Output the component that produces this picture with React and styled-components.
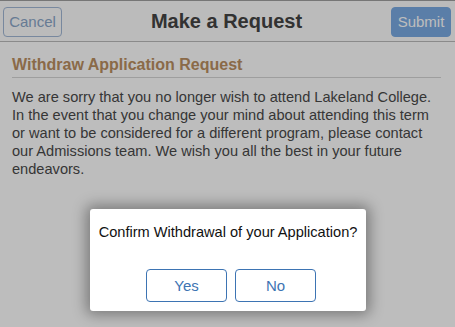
import React from "react";
import styled, { createGlobalStyle } from "styled-components";

const Global = createGlobalStyle`
  html, body { margin: 0; padding: 0; background: #fff; }
  body { font-family: "Liberation Sans", Arial, sans-serif; width: 455px; height: 327px; overflow: hidden; }
  #root { position: relative; width: 455px; height: 327px; }
`;

const Page = styled.div`
  width: 455px;
  height: 327px;
  background: #fff;
  border-top: 1px solid #a0a0a0;
  box-sizing: border-box;
`;

const Header = styled.header`
  height: 41px;
  box-sizing: border-box;
  display: flex;
  align-items: center;
  justify-content: space-between;
  padding: 0 4px 0 3px;
  border-bottom: 1px solid #bbb;
  background: #fcfcfc;
`;

const HeaderButton = styled.button`
  height: 30px;
  width: ${(p) => p.$w}px;
  margin-top: 1px;
  box-sizing: border-box;
  border-radius: 4px;
  font-family: "Liberation Sans", Arial, sans-serif;
  font-size: 15px;
  padding: 0;
  border: 1px solid ${(p) => (p.$primary ? "#7aabe3" : "#a2b8d6")};
  background: ${(p) => (p.$primary ? "#7aabe3" : "transparent")};
  color: ${(p) => (p.$primary ? "#fff" : "#8aa6c8")};
`;

const Title = styled.h1`
  margin: 0;
  font-size: 20px;
  font-weight: bold;
  color: #444;
`;

const Content = styled.main`
  padding: 14px 14px 0 12px;
`;

const SectionTitle = styled.h2`
  margin: 0;
  font-size: 16px;
  font-weight: bold;
  color: #bb8f62;
  padding-bottom: 3px;
  border-bottom: 1px solid #d6d6d6;
`;

const Paragraph = styled.p`
  margin: 10px 0 0;
  font-size: 14.6px;
  line-height: 18px;
  color: #4a4a4a;
`;

const Overlay = styled.div`
  position: absolute;
  inset: 0;
  background: rgba(0, 0, 0, 0.26);
`;

const Modal = styled.div`
  position: absolute;
  left: 90px;
  top: 209px;
  width: 276px;
  height: 102px;
  box-sizing: border-box;
  background: #fff;
  border-radius: 3px;
  box-shadow: 0 0 14px 4px rgba(0, 0, 0, 0.35);
  display: flex;
  flex-direction: column;
  align-items: center;
  padding-top: 15px;
`;

const ModalText = styled.div`
  font-size: 14.6px;
  color: #111;
`;

const ButtonRow = styled.div`
  display: flex;
  gap: 8px;
  margin-top: 29px;
  padding-left: 6px;
`;

const ModalButton = styled.button`
  width: 81px;
  height: 33px;
  box-sizing: border-box;
  border: 1px solid #3d74b3;
  border-radius: 4px;
  background: #fff;
  color: #3d74b3;
  font-family: "Liberation Sans", Arial, sans-serif;
  font-size: 15px;
  padding: 0;
`;

export default function App() {
  return (
    <>
      <Global />
      <Page>
        <Header>
          <HeaderButton $w={59}>Cancel</HeaderButton>
          <Title>Make a Request</Title>
          <HeaderButton $w={60} $primary>Submit</HeaderButton>
        </Header>
        <Content>
          <SectionTitle>Withdraw Application Request</SectionTitle>
          <Paragraph>
            We are sorry that you no longer wish to attend Lakeland College. In the event that you change your mind
            about attending this term or want to be considered for a different program, please contact our
            Admissions team. We wish you all the best in your future endeavors.
          </Paragraph>
        </Content>
      </Page>
      <Overlay />
      <Modal>
        <ModalText>Confirm Withdrawal of your Application?</ModalText>
        <ButtonRow>
          <ModalButton>Yes</ModalButton>
          <ModalButton>No</ModalButton>
        </ButtonRow>
      </Modal>
    </>
  );
}
